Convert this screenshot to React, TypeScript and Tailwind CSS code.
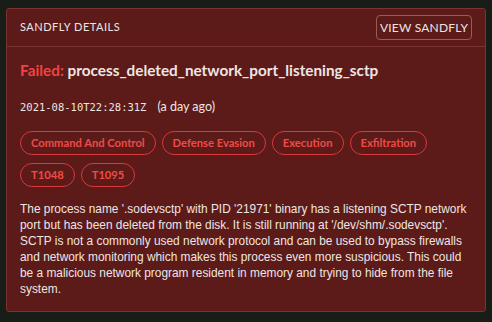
const tags = ["Command And Control", "Defense Evasion", "Execution", "Exfiltration", "T1048", "T1095"];

export default function App() {
  return (
    <div className="min-h-screen bg-[#181d18] pt-2 px-[6px] font-['Lato',sans-serif]">
      <div className="w-[480px] h-[304px] rounded-[3px] border border-[#7a3330] bg-[#5c1a18] text-[#ece6e4]">
        <div className="flex items-center justify-between h-[38px] pl-[13px] pr-[13px] border-b border-[#7a3330]">
          <span className="text-[11px] tracking-[0.5px] uppercase">Sandfly Details</span>
          <button className="h-[25px] w-[96px] rounded-[4px] border border-[#9a5a56] text-[12px] tracking-[0.2px] uppercase">
            View Sandfly
          </button>
        </div>
        <div className="px-[13px] pt-[13px]">
          <h2 className="text-[15.3px] font-bold leading-[20px]">
            <span className="text-[#ef4444]">Failed:</span> process_deleted_network_port_listening_sctp
          </h2>
          <div className="mt-[19px] text-[12.5px] leading-[16px]">
            <span className="font-['DejaVu_Sans_Mono',monospace] text-[10.5px] mr-[11px]">2021-08-10T22:28:31Z</span>
            <span>(a day ago)</span>
          </div>
          <div className="mt-[16px] flex flex-wrap gap-x-[6px] gap-y-[8px]">
            {tags.map((t) => (
              <span
                key={t}
                className="h-[24px] px-[10px] flex items-center rounded-full border border-[#d8393a] text-[#f04a47] text-[11.2px] font-bold"
              >
                {t}
              </span>
            ))}
          </div>
          <p className="mt-[14px] pr-[2px] font-['Liberation_Sans',sans-serif] text-[11.9px] leading-[16px]">
            The process name '.sodevsctp' with PID '21971' binary has a listening SCTP network port but has been deleted
            from the disk. It is still running at '/dev/shm/.sodevsctp'. SCTP is not a commonly used network protocol and
            can be used to bypass firewalls and network monitoring which makes this process even more suspicious. This
            could be a malicious network program resident in memory and trying to hide from the file system.
          </p>
        </div>
      </div>
    </div>
  );
}
